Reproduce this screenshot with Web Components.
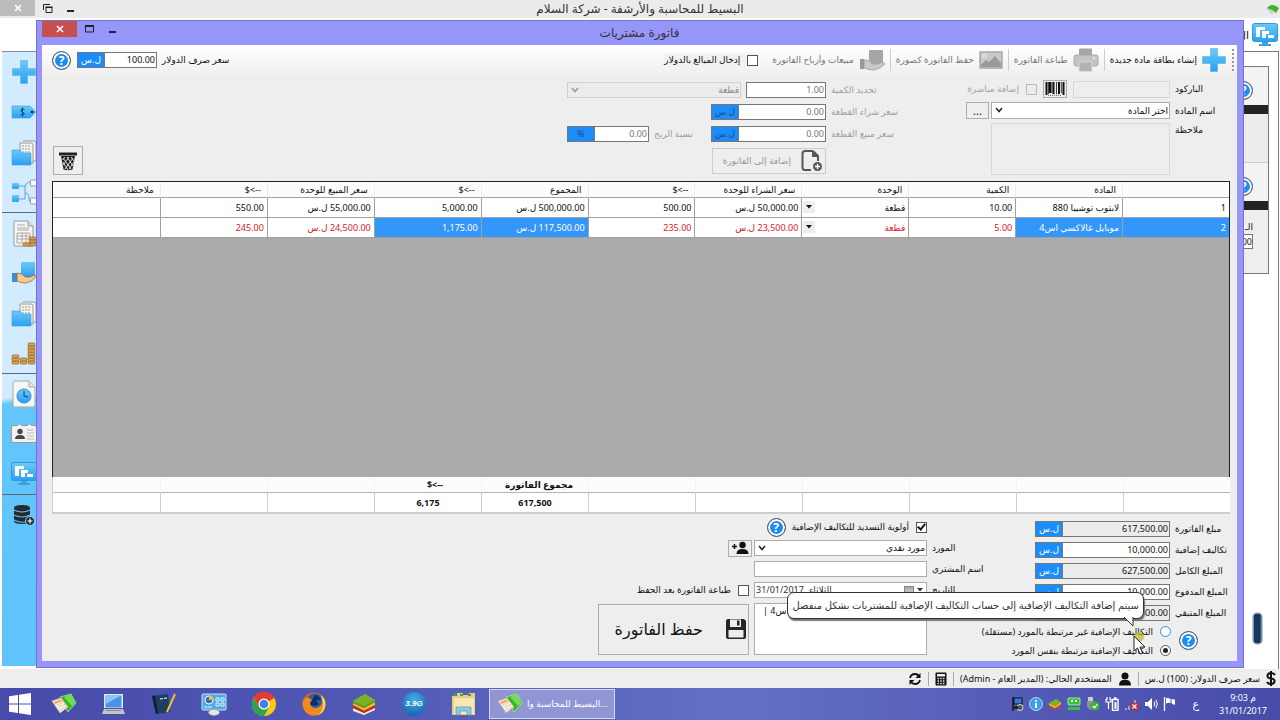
<!DOCTYPE html>
<html lang="ar" dir="rtl">
<head>
<meta charset="utf-8">
<title>البسيط للمحاسبة والأرشفة</title>
<style>
html,body{height:100%;margin:0}
body{font-family:"Noto Sans","DejaVu Sans",sans-serif;font-size:9px;line-height:14px;color:#111;overflow:hidden;background:#fff}
</style>
</head>
<body>
<desktop-shell>
  <app-window slot="app"></app-window>
  <invoice-dialog slot="dialog"></invoice-dialog>
  <status-bar slot="status"></status-bar>
  <task-bar slot="task"></task-bar>
</desktop-shell>
<script>
const BLUE='<linearGradient id="b" x1="0" y1="0" x2="0" y2="1"><stop offset="0" stop-color="#6cc9f7"/><stop offset="1" stop-color="#2aa0f4"/></linearGradient>';
const FOLDER='<path d="M12 2h11q2 0 2 2v18h-3M9 4h11q2 0 2 2v18H9z" fill="#f4f4f0" stroke="#999"/><path d="M11 7h8M11 10h9M11 13h9" stroke="#999" stroke-dasharray="2 1"/><path d="M1 11h8l2 3h9v12H1z" fill="url(#b)" stroke="#3a9fe0" stroke-width=".6"/>';
const COIN=(x,y)=>`<rect x="${x}" y="${y}" width="7" height="3" rx="1.2" fill="#d9a655" stroke="#8a5c22" stroke-width=".7"/>`;
const ICONS={
 plus:[24,24,'<path d="M8.500.5h7v8h8v7h-8v8h-7v-8h-8v-7h8z" fill="url(#b)" stroke="#58b4ea" stroke-width=".6"/>'],
 tag:[26,14,'<path d="M1 1h18l6 6-6 6H1z" fill="url(#b)" stroke="#3f9bd8" stroke-width=".6"/><path d="M13.500 4.500q-2.500-1.500-3.500 0t1.500 2.500 1.500 2.500-3.500 0M11.500 2.500v9" fill="none" stroke="#124a78"/><circle cx="21" cy="7" r="1.300" fill="#123"/>'],
 folder:[26,27,FOLDER],
 tree:[26,26,'<path d="M8 7h6M8 20h6M14 20V9q0-6 6-6M14 14q4 0 4 5t2 2" fill="none" stroke="#58a5d8"/><rect x="1" y="4" width="7" height="6" rx="1" fill="url(#b)"/><rect x="1" y="16" width="7" height="7" rx="1" fill="url(#b)"/><rect x="19.500" y="1" width="6" height="6" rx="1" fill="#fff" stroke="#999"/><rect x="19.500" y="19" width="6" height="6" rx="1" fill="#fff" stroke="#999"/>'],
 report:[26,27,'<path d="M3 1h14l5 5v20H3z" fill="#f6f6f2" stroke="#999"/><path d="M17 1v5h5" fill="#ddd" stroke="#999"/><path d="M6 5h8M6 8h12M6 10h12" stroke="#aaa"/><path d="M6 13h13v10H6zM6 16h13M6 19h13M11 13v10M15 13v10" fill="none" stroke="#999" stroke-width=".8"/>'+COIN(18,17)+COIN(18,20)+COIN(18,23)+COIN(12,23)],
 give:[26,24,'<rect x="10" y="1" width="14" height="15" rx="1" fill="url(#b)"/><path d="M1 12h5v9H1z" fill="#3a8fd0"/><path d="M6 12q6 0 8 4h5q6-3 7-1-5 6-11 7-5 0-9-2z" fill="#f3cc90" stroke="#9b6b34" stroke-width=".8"/>'],
 coins:[26,24,[20,17,14,11,8,5,2].map(y=>COIN(17,y)).join('')+[20,17].map(y=>COIN(9,y)).join('')+[20,17,14].map(y=>COIN(1,y)).join('')],
 clockdoc:[26,28,'<path d="M4 1h14l6 6v18q0 2-2 2H4q-2 0-2-2V3q0-2 2-2z" fill="#f7f7f5" stroke="#aaa"/><path d="M18 1v6h6" fill="#e5e5e5" stroke="#aaa"/><circle cx="13" cy="16" r="7" fill="url(#b)" stroke="#2b8fd8"/><path d="M13 11v5l4 1" fill="none" stroke="#185c94" stroke-width="1.300"/>'],
 card:[26,18,'<rect x=".5" y=".5" width="25" height="17" rx="1.500" fill="#f1f1ee" stroke="#999"/><circle cx="9" cy="6.500" r="2.700" fill="#444"/><path d="M4 14q0-4 5-4t5 4z" fill="#444"/><path d="M16 5h7M16 8h7M16 11h7M16 14h7" stroke="#bbb"/><path d="M7 .5h3M17 .5h3" stroke="#fff" stroke-width="2"/>'],
 monitor:[26,24,'<rect x=".5" y=".5" width="25" height="18" rx="2" fill="url(#b)" stroke="#2f98df"/><path d="M4 14V4h9v3H8v7zM10 15V8h7v3h-3v4zM16 15v-3h6v3z" fill="#fff"/><path d="M10 19h6v2h3v2H7v-2h3z" fill="#3f9fe0"/>'],
 dbadd:[22,22,'<path d="M1 4q0-3 8-3t8 3v13q0 3-8 3t-8-3z" fill="#252a2e"/><path d="M1 6q8 4 16 0M1 11q8 4 16 0M1 16q6 3 11 2" fill="none" stroke="#62c4fb" stroke-width="1.200"/><circle cx="17" cy="17" r="4.500" fill="#252a2e" stroke="#8ad4ff"/><path d="M17 14.500v5M14.500 17h5" stroke="#fff" stroke-width="1.200"/>'],
 printer:[26,24,'<rect x="6" y=".5" width="13" height="9" rx="1" fill="#a5a5a5"/><rect x="1" y="7" width="24" height="11" rx="2" fill="#c4c4c4" stroke="#a8a8a8"/><rect x="6" y="14" width="13" height="9.500" rx="1" fill="#b3b3b3" stroke="#ddd" stroke-width=".8"/><circle cx="21" cy="10" r="1" fill="#f2f2f2"/>'],
 image:[24,18,'<rect x="1" y="1" width="22" height="16" fill="#c9c9c9" stroke="#a9a9a9" stroke-width="1.500"/><circle cx="5.500" cy="5" r="2" fill="none" stroke="#eee"/><path d="M2 14l5-5 3 2 6-6 6 7v4H2z" fill="#999"/>'],
 grayhand:[26,22,'<rect x="10" y="1" width="14" height="15" rx="1" fill="#a6a6a6"/><path d="M1 10h4v10H1z" fill="#999"/><path d="M5 11q7 0 8 4h5q6-3 8 0-5 5-11 6-5 0-10-2z" fill="#c9c9c9" stroke="#999" stroke-width=".8"/>'],
 barcode:[20,14,'<path d="M1.500 0v13M5 0v11M8.500 0v12M14 0v12M18.500 0v13" stroke="#111" stroke-width="2"/><path d="M3.500 0v12M11.500 0v12M16.300 0v11M6.800 0v11" stroke="#111" stroke-width=".8"/><path d="M3 13.300h14" stroke="#333" stroke-width=".8" stroke-dasharray="1 1"/>'],
 docadd:[22,22,'<path d="M12 1H4Q1.500 1 1.500 3.500v14Q1.500 20 4 20h6M12 1l5 5v5" fill="none" stroke="#555" stroke-width="2"/><path d="M11 1v6h6z" fill="#555"/><circle cx="16.500" cy="16.500" r="4.500" fill="#555"/><path d="M16.500 13.800v5.400M13.800 16.500h5.400" stroke="#fff" stroke-width="1.300"/>'],
 trash:[20,20,'<path d="M1 1.500h18v3H1z" fill="#222"/><path d="M3 5h14l-2.500 13.500q-4.500 1.500-9 0z" fill="#222"/><path d="M5 7l8 11M9 6l6 9M13 6l3 4M5 11l5 8M15 7L7 18M11 6l-6 8M7 6L4.500 9M16 11l-5 7" stroke="#eee" stroke-width=".9"/>'],
 useradd:[18,14,'<circle cx="11.500" cy="4" r="3.200" fill="#111"/><path d="M5.500 13q0-5 6-5t6 5z" fill="#111"/><path d="M3.500 3v5M1 5.500h5" stroke="#111" stroke-width="1.500"/>'],
 user:[14,14,'<circle cx="7" cy="4" r="3.500" fill="#111"/><path d="M1 13.500q0-5 4-5.500h4q4 .5 4 5.500z" fill="#111"/>'],
 save:[22,22,'<path d="M1 3q0-2 2-2h16l2 2v16q0 2-2 2H3q-2 0-2-2z" fill="#26262a"/><rect x="5" y="1.500" width="11" height="7.500" fill="#eee"/><rect x="12" y="2.500" width="2.500" height="5" fill="#26262a"/><rect x="3.500" y="12" width="15" height="7.500" fill="#eee"/>'],
 calc:[12,14,'<rect x=".5" y=".5" width="11" height="13" rx="1" fill="#111"/><rect x="2" y="2" width="8" height="2.500" fill="#eee"/><path d="M2.500 6.500h7M2.500 9h7M2.500 11.500h7" stroke="#eee" stroke-width="1.300" stroke-dasharray="1.500 1.200"/>'],
 refresh:[14,14,'<path d="M2 6q1-4 5-4 2.500 0 4 2M12 8q-1 4-5 4-2.500 0-4-2" fill="none" stroke="#111" stroke-width="1.800"/><path d="M12.500 1v5h-5zM1.500 13V8h5z" fill="#111"/>'],
 chev:[8,6,'<path d="M1 1l3 3.500L7 1" fill="none" stroke="currentColor" stroke-width="1.500"/>'],
 caret:[6,4,'<path d="M0 0h6L3 3.500z" fill="currentColor"/>'],
 calendar:[10,9,'<rect x=".5" y=".5" width="9" height="8" fill="#bbc" stroke="#888"/><path d="M1 2h8" stroke="#999"/>'],
 close:[8,8,'<path d="M1 1l6 6M7 1L1 7" stroke="#fff" stroke-width="1.600"/>'],
 max:[9,8,'<path d="M.5 1.500h8v5.500h-8z" fill="none" stroke="#222"/><path d="M0 1h9" stroke="#222" stroke-width="2"/>'],
 restore:[10,9,'<path d="M.5 6V.5H7M3 3.500h6v5H3z" fill="none" stroke="#222"/><path d="M2.500 3.200h7" stroke="#222" stroke-width="1.500"/>'],
 min:[8,8,'<path d="M0 7h7" stroke="#222" stroke-width="2"/>'],
 leaf:[14,12,'<path d="M1 5q5-6 12 0l-3 5-4-3z" fill="#3fb52b"/><path d="M1 5l5 3v3z" fill="#e9e9e9" stroke="#999" stroke-width=".5"/>'],
 pen:[14,38,'<rect x="2" y="1" width="9" height="31" rx="4" fill="#16355f" stroke="#a7b4c4" stroke-width="1.500"/><path d="M10 4v26" stroke="#5d7ea8"/>'],
 start:[22,22,'<path d="M0 3.200l9-1.300v8.600H0zM10 1.700L22 0v10.500H10zM0 11.500h9v8.600L0 18.800zM10 11.500h12V22l-12-1.700z" fill="#fff"/>'],
 basit:[26,22,'<path d="M9 4L20 1l5 9-8 9z" fill="#37b526" stroke="#bdf0a8" stroke-width=".7"/><path d="M13 4l8 9 3-3-4-9z" fill="#71dd52"/><path d="M1 8l9-3 7 9-8 6z" fill="#f3f1e6" stroke="#caa"/><path d="M3 9l7-2.500 1 1.500-6.500 3z" fill="#f0a24c"/><path d="M6 12l7-3M8 14l7-3M9 17l6-3" stroke="#d8b890" stroke-dasharray="1.500 1"/>'],
 laptop:[24,22,'<rect x="2" y="1" width="19" height="14" fill="#e4e8ee"/><rect x="3.500" y="2.500" width="16" height="12" fill="#4793e6"/><path d="M3.500 2.500h16L3.500 11z" fill="#8dc4fa"/><path d="M2 16h19l2 5H0z" fill="#c2c6cc"/><path d="M4 17.500h15" stroke="#888"/>'],
 notebook:[26,24,'<path d="M1 4l16-2 2 18-14 2z" fill="#1d3f63"/><path d="M1 4l3-.500 3 18-2 .5z" fill="#0d1f36"/><path d="M9 7l7-1" stroke="#fff" stroke-dasharray="3 1"/><path d="M24 2l-8 18" stroke="#f3bd31" stroke-width="2"/>'],
 panel:[26,24,'<rect x="1" y="2" width="24" height="16" rx="1" fill="#56a9df" stroke="#c3e3f8"/><circle cx="8" cy="8" r="4" fill="#2c76b8" stroke="#fff"/><path d="M8 4v4h4q0-4-4-4z" fill="#f7b33c"/><path d="M15 6h3v3h-3zM20 6h3v3h-3zM15 11h3v3h-3zM20 11h3v3h-3zM3 15h8" fill="none" stroke="#dff1ff"/><ellipse cx="13" cy="20.500" rx="5.500" ry="3" fill="#e8e8e8" stroke="#999" stroke-width=".6"/>'],
 chrome:[24,24,'<circle cx="12" cy="12" r="12" fill="#fbc914"/><path d="M12 12L1.600 6A12 12 0 0 1 22.400 6z" fill="#e33b2e"/><path d="M12 6h10.400A12 12 0 0 0 1.600 6L7 15z" fill="#e33b2e"/><path d="M1.600 6A12 12 0 0 0 12 24l5.200-9L12 17 7 15z" fill="#2fa24c"/><circle cx="12" cy="12" r="5.500" fill="#fff"/><circle cx="12" cy="12" r="4.300" fill="#3f7df0"/>'],
 firefox:[24,24,'<circle cx="12" cy="12" r="11.500" fill="#e8601c"/><circle cx="13" cy="9.500" r="8" fill="#2561a8"/><path d="M13 3q5 1 6 6-3-3-5 0 3 1 2 4-6 2-8-1z" fill="#0f2d5f"/><path d="M1 8q3-3 6-2l3 2-2 2q0 6 6 6 5-1 6-5 1-5-2-8 6 4 5 10-1 10-11 10.500Q2 23 .5 13z" fill="#f08a1e"/><path d="M19 3q5 4 4.500 10-1 8-8 10.500 6-5 5.500-12z" fill="#fcd34a"/>'],
 blue:[24,22,'<path d="M1 15l11 5 11-6v3l-11 5L1 18z" fill="#efe9dc"/><path d="M1 12l11 5 11-6v4l-11 5L1 15z" fill="#c92b1c"/><path d="M1 10l11 5 11-6v3l-11 5.500L1 12z" fill="#f0c020"/><path d="M1 8l12-7 10 6v2l-11 6L1 10z" fill="#649c1d"/><path d="M1 8l12-7 10 6-11 6z" fill="#7cb325"/>'],
 layers:[14,12,'<path d="M1 7l6 3 6-4v2l-6 4-6-3z" fill="#d8402a"/><path d="M1 5l6 3 6-4v2l-6 4-6-3z" fill="#f0c020"/><path d="M1 5l7-4 5 3-6 4z" fill="#7cb325"/>'],
 folders:[26,24,'<path d="M1 4h5V1h6v2h6V1h6v22H1z" fill="#e6cf83"/><path d="M3 6h20v16H3z" fill="#f8e8ae"/><path d="M2 3h3M9 3h3M17 3h3" stroke="#3ba33b" stroke-width="2"/><path d="M5 23v-8h15v8h-4v-4H9v4z" fill="#8fc9e8" stroke="#4e9bc4" stroke-width=".7"/>'],
 flag:[14,14,'<path d="M1.500 0v14" stroke="#fff" stroke-width="1.300"/><path d="M3 1q2-.5 5 1l4 .5v5q-2 .5-3-1-3-1.500-6 0z" fill="#fff"/><path d="M8 2v5" stroke="#5359b4"/>'],
 speaker:[14,14,'<path d="M1 5h3l4-4v12L4 9H1z" fill="#fff"/><path d="M10 4.500q1.500 2.500 0 5M12 3q2.500 4 0 8" fill="none" stroke="#fff"/>'],
 net:[15,14,'<path d="M1 13v-2h2v2zM4 13V9h2v4zM7 13V6h2v7zM10 13V3h2v10z" fill="#9ba1d8"/><rect x="7" y="6" width="7" height="7" fill="#d12a2a"/><path d="M8.500 7.500l4 4M12.500 7.500l-4 4" stroke="#fff" stroke-width="1.200"/>'],
 battery:[14,14,'<path d="M1 2v3h5V2M3.500 5v7M2 0v3M5 0v3" fill="none" stroke="#fff" stroke-width="1.200"/><path d="M7.500 2.500h5.500v11H7.500zM9 1h2.500" fill="none" stroke="#fff" stroke-width="1.400"/><rect x="9.500" y="5" width="2" height="7" fill="#fff"/>'],
 usb:[14,14,'<rect x="2" y="0" width="5" height="5" fill="#ccc"/><path d="M1 4h7v7q-3 4-7-1z" fill="#8d939b"/><circle cx="9" cy="9" r="4.500" fill="#36b338"/><path d="M6.800 9l1.700 1.800 2.800-3.500" fill="none" stroke="#fff" stroke-width="1.300"/>'],
 robot:[14,14,'<rect x="1" y="1" width="12" height="7" rx="1" fill="#35c33a" stroke="#dfffdc" stroke-width=".7"/><path d="M4 3h2v2H4zM8 3h2v2H8z" fill="#fff"/><path d="M1 10h12v3H1z" fill="#35c33a"/>'],
 info:[14,14,'<circle cx="7" cy="7" r="6.500" fill="#3c9fe6" stroke="#d6ecfb" stroke-width=".8"/><path d="M7 6v5M7 3v1.800" stroke="#fff" stroke-width="1.800"/>'],
 vid:[12,14,'<path d="M1 0v14" stroke="#111" stroke-width="1.500"/><rect x="2" y="1" width="8" height="6" fill="#3a72e0" stroke="#111"/><circle cx="8" cy="10.500" r="3" fill="#555" stroke="#ddd"/><path d="M2 9h4v3H2z" fill="#222"/>'],
 dollar:[10,15,'<path d="M9 4q-1-2-4-2T1.500 4.500 5 7.500t3.500 3T5 13t-4-2M5 0v15" fill="none" stroke="#111" stroke-width="2"/>'],
 cursor:[14,20,'<path d="M1 1v15l3.500-3 2.500 6 2.500-1-2.500-6h5z" fill="#fff" stroke="#222"/>']
};
function define(name,css,html){
  customElements.define(name,class extends HTMLElement{
    connectedCallback(){
      if(this.shadowRoot)return;
      const t=document.createElement('template');
      t.innerHTML=`<style>*{box-sizing:border-box}:host{box-sizing:border-box}input,button,select,textarea{font:inherit;color:inherit;margin:0;border-radius:0}${css}</style>`+(typeof html==='function'?html(this):html);
      this.attachShadow({mode:'open'}).append(t.content.cloneNode(true));
    }
  });
}
const a=(e,n,d='')=>e.getAttribute(n)??d;

define('ui-icon',':host{display:block;flex:none}svg{display:block}',e=>{
  const [w,h,s]=ICONS[a(e,'name')];
  return `<svg width="${w}" height="${h}" viewBox="0 0 ${w} ${h}" aria-hidden="true"><defs>${BLUE}</defs>${s}</svg>`;
});
define('help-button',':host{display:block;flex:none;width:19px;height:19px}button{display:block;width:19px;height:19px;padding:0;border:1px solid #555;border-radius:50%;background:#1b8cf5;box-shadow:inset 0 0 0 2px #fff;color:#fff;font:bold 12px/17px "Noto Sans",sans-serif;text-align:center}','<button type="button" aria-label="مساعدة">?</button>');

define('window-bar',`:host{display:grid;grid-template-columns:1fr auto 1fr;align-items:start;height:var(--bar-h)}
h1{grid-column:2;margin:0;font-weight:400;font-size:12px;line-height:var(--bar-h);color:#333}
nav{grid-column:3;display:flex;justify-content:flex-end}
button{border:0;background:none;padding:0;height:16px;width:23px;display:grid;place-items:center}
button.x{width:35px;background:var(--close);margin-inline-start:1px}
.lead{grid-column:1;padding-top:3px}`,
e=>`<div class="lead"><slot></slot></div><h1>${a(e,'title-text')}</h1><nav><button aria-label="تصغير"><ui-icon name="min"></ui-icon></button><button aria-label="تكبير"><ui-icon name="${a(e,'mode','max')}"></ui-icon></button><button class="x" aria-label="إغلاق"><ui-icon name="close"></ui-icon></button></nav>`);

define('amount-field',`:host{display:flex;align-items:center;gap:5px;height:16px}
label{width:var(--label-w,auto);text-align:left;white-space:nowrap;flex:none}
.box{display:flex;width:var(--field-w,135px);height:16px;border:1px solid #767676;background:#fff}
input{flex:1;min-width:0;border:0;padding:0 1px;background:none;text-align:right;direction:ltr;outline:0}
span{width:27px;background:#1b8cfa;color:#fff;text-align:center;border-inline-start:1px solid #777}
:host([off]) label{color:#a0a0a0}:host([off]) input{color:#777}:host([off]) span{color:#234d88}
:host([readonly]) .box{background:#ececec}`,
e=>`<label for="i">${a(e,'label')}</label><div class="box"><input id="i" value="${a(e,'value')}" ${e.hasAttribute('readonly')?'readonly':''} ${e.hasAttribute('off')?'disabled':''}>${e.hasAttribute('unit')?`<span>${a(e,'unit')}</span>`:''}</div>`);

define('combo-box',`:host{display:block;position:relative;height:16px}
select{appearance:none;display:block;width:100%;height:100%;border:1px solid #ababab;background:#fff;padding:0 1px;line-height:14px;opacity:1}
ui-icon{position:absolute;left:4px;top:5px;pointer-events:none;color:#222}
:host([off]) select{background:#ececec;border-color:#d0d0d0;color:#888}:host([off]) ui-icon{color:#999}`,
e=>`<select aria-label="${a(e,'name')}" ${e.hasAttribute('off')?'disabled':''}><option>${a(e,'value')}</option></select><ui-icon name="chev"></ui-icon>`);

define('check-item',`:host{display:flex;align-items:center;white-space:nowrap}label{display:flex;align-items:center;gap:7px}
input{appearance:none;flex:none;width:11px;height:11px;border:1px solid #555;background:#fff;display:grid;place-items:center}
input:checked::before{content:"";width:3px;height:6px;border:solid #111;border-width:0 2px 2px 0;rotate:40deg;translate:0 -1px}
input[type=radio]{border-radius:50%}input[type=radio]:checked::before{width:5px;height:5px;border:0;border-radius:50%;background:#222;rotate:none;translate:none}
:host([hot]) input{border-color:#2d8fe8}
:host([off]){color:#a5a5a5}:host([off]) input{border-color:#bbb;background:#ececec}`,
e=>`<label><input type="${a(e,'type','checkbox')}" ${e.hasAttribute('checked')?'checked':''} ${e.hasAttribute('off')?'disabled':''}><span>${a(e,'label')}</span></label>`);

define('tool-item',`:host{display:block;flex:none}button{display:flex;align-items:center;gap:5px;height:26px;border:0;background:none;padding:0;white-space:nowrap;color:#111}:host([off]) button{color:#777}`,
e=>`<button type="button"><ui-icon name="${a(e,'icon')}"></ui-icon><span>${a(e,'label')}</span></button>`);

define('invoice-toolbar',`:host{display:flex;align-items:center;height:33px;padding:0 3px 3px 10px;background:linear-gradient(#fff,#eee)}
i{width:1px;height:22px;background:#ccc;margin:0 5px}.grip{border-inline-start:2px dotted #999;width:2px;height:22px;background:none;margin:0 0 0 6px}
check-item{margin-inline-start:14px;background:#f1f1f1}.end{display:flex;align-items:center;gap:6px;margin-inline-start:auto}amount-field{--field-w:80px}`,
`<i class="grip"></i><tool-item icon="plus" label="إنشاء بطاقة مادة جديدة"></tool-item><i></i>
<tool-item off icon="printer" label="طباعة الفاتورة"></tool-item><i></i>
<tool-item off icon="image" label="حفظ الفاتورة كصورة"></tool-item><i></i>
<tool-item off icon="grayhand" label="مبيعات وأرباح الفاتورة"></tool-item>
<check-item label="إدخال المبالغ بالدولار"></check-item>
<div class="end"><amount-field label="سعر صرف الدولار" value="100.00" unit="ل.س"></amount-field><help-button></help-button></div>`);

define('item-form',`:host{display:flex;align-items:flex-start;padding:1px 7px 6px 11px}
.a,.b{display:grid}.a{grid-template-columns:55px 179px 23px;gap:4px 5px;grid-template-rows:18px 17px 52px;margin-top:1px}
.b{--label-w:69px;gap:6px;margin:3px 63px 0 0;justify-items:start}
label{text-align:left;white-space:nowrap;align-self:center}
.top{align-self:start}.row{display:flex;align-items:center;gap:5px}
.code{display:flex;align-items:center;gap:6px;grid-column:2/4}
input,textarea{border:1px solid #d8d8d8;background:#eee;padding:0}
#code{width:97px;height:17px}
textarea{resize:none;height:52px;display:block}
button{border:1px solid #adadad;background:#eee;padding:0;display:grid;place-items:center}
.bc{width:24px;height:18px}.dots{height:17px;width:23px;margin-inline-start:-3px;font-size:11px;line-height:8px}
combo-box.item{height:17px}combo-box.unit{width:174px}
.add{display:flex;align-items:center;gap:10px;width:114px;height:26px;border-color:#ccc;color:#999;margin-inline-start:74px;padding:0 2px}
.q{--field-w:80px}.s{--field-w:115px}.p{--label-w:52px;--field-w:82px}
.trash{width:30px;height:29px;margin-inline-start:auto;align-self:flex-end}`,
`<div class="a"><label for="code">الباركود</label><div class="code"><input id="code"><button class="bc" aria-label="باركود"><ui-icon name="barcode"></ui-icon></button><check-item off label="إضافة مباشرة"></check-item></div>
<label>اسم المادة</label><combo-box class="item" name="اسم المادة" value="اختر المادة"></combo-box><button class="dots">...</button>
<label class="top" for="note">ملاحظة</label><textarea id="note"></textarea></div>
<div class="b"><div class="row"><amount-field class="q" off label="تحديد الكمية" value="1.00"></amount-field><combo-box class="unit" off name="الوحدة" value="قطعة"></combo-box></div>
<amount-field class="s" off label="سعر شراء القطعة" value="0.00" unit="ل.س"></amount-field>
<div class="row"><amount-field class="s" off label="سعر مبيع القطعة" value="0.00" unit="ل.س"></amount-field><amount-field class="p" off label="نسبة الربح" value="0.00" unit="%"></amount-field></div>
<button class="add"><ui-icon name="docadd"></ui-icon>إضافة إلى الفاتورة</button></div>
<button class="trash" aria-label="حذف"><ui-icon name="trash"></ui-icon></button>`);

const HEAD=['','المادة','الكمية','الوحدة','سعر الشراء للوحدة','--&gt;$','المجموع','--&gt;$','سعر المبيع للوحدة','--&gt;$','ملاحظة'];
const ROWS=[['1','لابتوب توشيبا 880','10.00','قطعة','50,000.00 ل.س','500.00','500,000.00 ل.س','5,000.00','55,000.00 ل.س','550.00',''],
['2','موبايل غالاكسي اس4','5.00','قطعة','23,500.00 ل.س','235.00','117,500.00 ل.س','1,175.00','24,500.00 ل.س','245.00','']];
const cell=(v,i,r)=>i===3?`<td class="u"><select aria-label="الوحدة"><option>${v}</option></select><ui-icon name="caret"></ui-icon></td>`:`<td class="${r&&[0,1,6,7].includes(i)?'sel':''}">${v}</td>`;
define('invoice-grid',`:host{flex:1;display:flex;flex-direction:column;margin:0 7px 0 10px;min-height:0}
.body{flex:1;background:#ababab;border:solid #222;border-width:1px 1px 0}
table{width:100%;table-layout:fixed;border-collapse:separate;border-spacing:0;background:#fff}
th,td{padding:0;text-align:right;font-weight:400;white-space:nowrap;overflow:hidden;height:20px;border-left:1px solid #a0a0a0;border-bottom:1px solid #a0a0a0;padding-right:3px}
th{height:16px;padding-right:6px;background:#fcfcfc;border-left-color:#eee}
tr>:last-child{border-left:0}
.red td{color:#d8202c}.red td.sel{background:#3296fa;color:#fff}
.u{position:relative}.u select{appearance:none;border:0;background:none;width:100%;height:18px;padding:0;display:block}
.u ui-icon{position:absolute;left:1px;top:3px;padding:4px 3px;background:#eee;color:#111;pointer-events:none}
.sum{border:1px solid #ccc;border-top:0;border-right:0}.sum th,.sum td{font-weight:700;border-color:#ccc}.sum th{padding-right:15px;border-bottom-color:#b5b5b5;border-left-color:#f4f4f4}.sum td{text-align:center;padding:0}
.sum th:nth-child(8){padding-right:38px}`,
`<div class="body"><table><thead><tr>${HEAD.map(h=>`<th>${h}</th>`).join('')}</tr></thead><tbody>${ROWS.map((r,n)=>`<tr class="${n?'red':''}">${r.map((v,i)=>cell(v,i,n)).join('')}</tr>`).join('')}</tbody></table></div>
<table class="sum"><thead><tr>${HEAD.map((h,i)=>`<th>${i===6?'مجموع الفاتورة':i===7?'--&gt;$':''}</th>`).join('')}</tr></thead><tbody><tr>${HEAD.map((h,i)=>`<td>${i===6?'617,500':i===7?'6,175':''}</td>`).join('')}</tr></tbody></table>`);

define('balloon-tip',`:host{display:block;white-space:nowrap;border:1px solid #333;border-radius:7px;background:#fff;box-shadow:1px 2px 1px #777;padding:4px 4px 5px;line-height:16px;font-size:10px;color:#333}
svg{position:absolute;right:8px;top:100%;margin-top:-1px;display:block}`,
'<slot></slot><svg width="12" height="11" viewBox="0 0 12 11"><path d="M1 0l9 9V0" fill="#fff" stroke="#333"/></svg>');

define('payment-form',`:host{display:flex;align-items:flex-start;padding:5px 7px 5px 11px;--label-w:55px}
.t{display:grid;gap:5px;width:195px;padding-top:2px}
.r{display:flex;gap:8px;align-items:center;padding-right:32px;margin-top:-2px;height:32px}
.radios{display:grid;gap:5px;position:relative;margin-top:2px}
balloon-tip{position:absolute;bottom:39px;right:27px}
.cur{position:absolute;right:24px;top:10px}.dot{position:absolute;right:27px;top:7px;width:10px;height:10px;border-radius:50%;background:#b8b820b0}
.m{display:grid;grid-template-columns:60px 173px 151px;grid-template-rows:16px 16px 16px 16px 52px;gap:5px;margin-right:43px;align-items:center}
.m label{text-align:left;white-space:nowrap}.pri{grid-column:2/4;display:flex;gap:6px;align-items:center}
input.f,textarea,.date{height:16px;border:1px solid #ababab;background:#fff;padding:0;width:100%}
textarea{grid-column:2;height:52px;resize:none;text-align:left;padding:0 8px;display:block;overflow:hidden}
button{border:1px solid #adadad;background:#eee;padding:0;display:grid;place-items:center}
.ua{width:24px;height:17px;margin-inline-start:-3px}
.date{display:flex;align-items:center;gap:3px;padding:0 3px 0 1px;color:#333}.date input{border:0;background:none;flex:none;width:50px;text-align:left;padding:0}.date span{margin-inline-start:auto}
.save{display:flex;align-items:center;width:151px;height:51px;padding:0 1px;font-size:16px;line-height:24px;gap:22px;white-space:nowrap}`,
`<div class="t"><amount-field readonly label="مبلغ الفاتورة" value="617,500.00" unit="ل.س"></amount-field>
<amount-field label="تكاليف إضافية" value="10,000.00" unit="ل.س"></amount-field>
<amount-field readonly label="المبلغ الكامل" value="627,500.00" unit="ل.س"></amount-field>
<amount-field label="المبلغ المدفوع" value="10,000.00" unit="ل.س"></amount-field>
<amount-field readonly label="المبلغ المتبقي" value="617,500.00" unit=""></amount-field>
<div class="r"><help-button></help-button><div class="radios"><check-item hot type="radio" label="التكاليف الإضافية غير مرتبطة بالمورد (مستقلة)"></check-item><check-item type="radio" checked label="التكاليف الإضافية مرتبطة بنفس المورد"></check-item>
<balloon-tip role="tooltip">سيتم إضافة التكاليف الإضافية إلى حساب التكاليف الإضافية للمشتريات بشكل منفصل</balloon-tip><div class="dot"></div><ui-icon class="cur" name="cursor"></ui-icon></div></div></div>
<div class="m"><div class="pri"><check-item checked label="أولوية التسديد للتكاليف الإضافية"></check-item><help-button></help-button></div>
<label style="grid-column:1">المورد</label><combo-box name="المورد" value="مورد نقدي"></combo-box><button class="ua" aria-label="إضافة مورد"><ui-icon name="useradd"></ui-icon></button>
<label for="buyer">اسم المشتري</label><input class="f" id="buyer"><span></span>
<label for="d">التاريخ</label><div class="date"><ui-icon name="caret"></ui-icon><ui-icon name="calendar"></ui-icon><span>الثلاثاء</span><input id="d" value="31/01/2017" dir="ltr"></div><check-item label="طباعة الفاتورة بعد الحفظ"></check-item>
<textarea aria-label="بيان">موبايل غالاكسي اس4 |</textarea><button class="save"><ui-icon name="save"></ui-icon><span>حفظ الفاتورة</span></button></div>`);

define('invoice-dialog',`:host{position:absolute;inset:20px 36px 1px 36px;display:flex;flex-direction:column;background:#9696fa;border:1px solid #7474c0;padding:0 6px 6px 5px;--bar-h:24px;--close:#c84f50}
main{flex:1;display:flex;flex-direction:column;background:#eee;min-height:0}`,
`<window-bar title-text="فاتورة مشتريات"></window-bar><main><invoice-toolbar></invoice-toolbar><item-form></item-form><invoice-grid></invoice-grid><payment-form></payment-form></main>`);

define('side-bar',`:host{display:flex;flex-direction:column;align-items:flex-start;width:35px;margin-left:2px;border-top:1px solid #889;background:linear-gradient(172deg,#d2ebff 0 56%,#62c6fc 57%,#5fc4fb)}
button{border:0;background:none;padding:0;width:27px;height:40px;display:grid;place-items:center;overflow:hidden}hr{width:100%;border:0;border-top:1px solid #667;margin:0}`,
['plus','tag','folder','tree','-','report','give','folder','coins','-','clockdoc','card','monitor','-','dbadd'].map(n=>n==='-'?'<hr>':`<button aria-label="${n}"><ui-icon name="${n}"></ui-icon></button>`).join(''));

define('back-panel',`:host{display:block;width:36px;margin-right:1px;border:solid #777;border-width:1px 1px 0 0;padding:14px 9px 0 0}
section{border:solid #777;border-width:1px 1px 1px 0;height:208px;background:#f3f3f3;display:flex;flex-direction:column}
.h{height:38px;overflow:hidden;padding-top:14px}.h help-button{margin-right:15px}
b{height:9px;background:#222}.g{height:49px;background:#ececec;border-bottom:1px solid #ccc}
.last{background:#eee;flex:1;padding-top:10px;direction:ltr}input{width:10px;height:15px;border:1px solid #777;background:#fff;padding:0;display:block;direction:rtl}label{display:block;padding-left:2px}
.pen{margin:338px 4px 0 0}`,
`<section><div class="h"><help-button></help-button></div><b></b><div class="g"></div><div class="h"><help-button></help-button></div><b></b><div class="last"><label for="z">الـ</label><input id="z" value="00"></div></section><ui-icon class="pen" name="pen"></ui-icon>`);

define('app-window',`:host{display:flex;flex-direction:column;height:100%;--bar-h:18px;--close:#bcbcbc}
window-bar{background:#ebebeb}header{display:flex;align-items:center;gap:3px;height:33px;padding:0 2px;font-size:11px}
.area{flex:1;display:flex;justify-content:space-between;min-height:0}side-bar{margin-bottom:3px}`,
`<window-bar mode="restore" title-text="البسيط للمحاسبة والأرشفة - شركة السلام"><ui-icon name="leaf"></ui-icon></window-bar><header><ui-icon name="monitor"></ui-icon><span>ال</span></header><div class="area"><back-panel></back-panel><side-bar></side-bar></div>`);

define('status-bar',`:host{display:flex;align-items:center;gap:6px;height:19px;background:#eee;padding:0 4px;white-space:nowrap}i{width:1px;height:14px;background:#aaa}button{border:0;background:none;padding:0}`,
`<ui-icon name="dollar"></ui-icon><span>سعر صرف الدولار: (100) ل.س</span><i></i><ui-icon name="user"></ui-icon><span>المستخدم الحالي: (المدير العام - Admin)</span><i></i><button aria-label="حاسبة"><ui-icon name="calc"></ui-icon></button><i></i><button aria-label="تحديث"><ui-icon name="refresh"></ui-icon></button>`);

define('task-bar',`:host{display:flex;align-items:center;direction:ltr;height:32px;background:linear-gradient(90deg,#474ba9,#4f56b3 25%,#6371c5 58%,#555cb8 78%,#474ca9);color:#fff;padding-right:13px}
nav{display:flex;align-items:center}button{border:0;background:none;padding:0;display:grid;place-items:center}nav>button{width:50px;height:30px}nav>button:first-child{width:39px}
nav>.act{display:flex;align-items:center;gap:4px;width:126px;border:1px solid #d6d8f0;background:#9096d3;padding:0 7px;white-space:nowrap}
.g{width:24px;height:24px;border-radius:50%;background:radial-gradient(circle at 50% 30%,#3fb0e8,#12539f);font:italic bold 8px/24px "Liberation Sans",sans-serif;text-align:center}
.tray{margin-left:auto;display:flex;align-items:center;gap:5px}.tray b{font-weight:400;font-size:11px;margin:0 15px 0 11px}
.clock{text-align:center;direction:rtl}.clock div{height:13px}`,
`<nav>${['start','basit','laptop','notebook','panel','chrome','firefox','blue'].map(n=>`<button aria-label="${n}"><ui-icon name="${n}"></ui-icon></button>`).join('')}<button><span class="g">3.9G</span></button><button aria-label="folders"><ui-icon name="folders"></ui-icon></button><button class="act"><ui-icon name="basit"></ui-icon><span dir="rtl">...البسيط للمحاسبة وا</span></button></nav>
<div class="tray">${['vid','info','layers','robot','usb','battery','net','speaker','flag'].map(n=>`<ui-icon name="${n}"></ui-icon>`).join('')}<b>ع</b><div class="clock"><div>م 9:03</div><div>31/01/2017</div></div></div>`);

define('desktop-shell',`:host{display:flex;flex-direction:column;height:100vh}.stage{flex:1;position:relative;min-height:0}`,
`<div class="stage"><slot name="app"></slot><slot name="dialog"></slot></div><slot name="status"></slot><slot name="task"></slot>`);
</script>
</body>
</html>
